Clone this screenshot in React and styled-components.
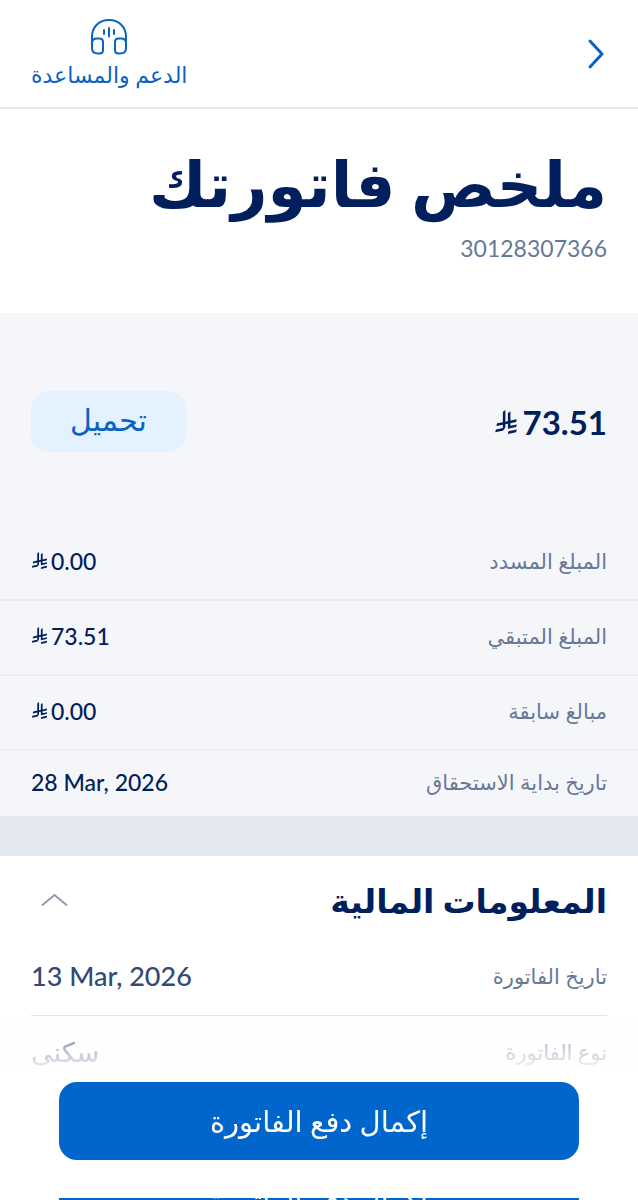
import { useState } from "react";
import styled, { createGlobalStyle } from "styled-components";

const GlobalStyle = createGlobalStyle`
  * {
    box-sizing: border-box;
  }
  body {
    margin: 0;
    background-color: #fff;
    color: #001f5c;
    font-family: Lato, "DejaVu Sans", sans-serif;
  }
  button {
    font-family: inherit;
    cursor: pointer;
  }
`;

const Page = styled.div`
  min-height: 100vh;
  padding-bottom: 120px;
`;

const TopBar = styled.header`
  display: flex;
  align-items: center;
  justify-content: space-between;
  height: 109px;
  padding: 0 31px;
  border-bottom: 2px solid #e6e8ed;
`;

const BackButton = styled.button`
  display: flex;
  padding: 0;
  border: none;
  background: none;
  color: #0a62c4;
`;

const SupportLink = styled.a`
  display: flex;
  flex-direction: column;
  align-items: center;
  gap: 6px;
  color: #0a62c4;
  font-size: 22px;
  line-height: 28px;
  text-decoration: none;
`;

const Intro = styled.section`
  height: 204px;
  padding: 32px 31px 0;
`;

const Title = styled.h1`
  margin: 0;
  font-size: 63px;
  line-height: 84px;
  font-weight: 700;
  white-space: nowrap;
`;

const AccountNumber = styled.p`
  margin: 8px 0 0;
  color: #687898;
  font-size: 23px;
  line-height: 30px;
`;

const Summary = styled.section`
  background-color: #f5f6fa;
  border-bottom: 40px solid #e4e8f0;
`;

const TotalRow = styled.div`
  display: flex;
  align-items: center;
  justify-content: space-between;
  padding: 78px 31px 74px;
`;

const Amount = styled.span`
  display: inline-flex;
  align-items: center;
  gap: ${(props) => (props.$large ? "5px" : "3px")};
  direction: ltr;
  font-size: ${(props) => (props.$large ? "33px" : "23px")};
  font-weight: ${(props) => (props.$large ? 700 : 500)};
  line-height: 30px;
`;

const DownloadButton = styled.button`
  width: 155px;
  height: 61px;
  padding: 0 0 4px;
  border: none;
  border-radius: 18px;
  background-color: #e4f1ff;
  color: #0a62c4;
  font-size: 30px;
`;

const List = styled.dl`
  margin: 0;
`;

const Row = styled.div`
  display: flex;
  align-items: center;
  justify-content: space-between;
  height: ${(props) => (props.$last ? "65px" : "75px")};
  padding: 0 31px 4px;
  border-bottom: ${(props) => (props.$last ? "none" : "2px solid #ebedf2")};
`;

const Label = styled.dt`
  color: #687898;
  font-size: 21px;
  line-height: 30px;
`;

const Value = styled.dd`
  margin: 0;
  direction: ltr;
  font-size: 23px;
  font-weight: 500;
  line-height: 30px;
`;

const Details = styled.section`
  padding: 0 31px;
`;

const DetailsHeader = styled.div`
  display: flex;
  align-items: center;
  justify-content: space-between;
  height: 84px;
  padding-top: 4px;
`;

const DetailsTitle = styled.h2`
  margin: 0;
  font-size: 33px;
  line-height: 44px;
  font-weight: 700;
`;

const ToggleButton = styled.button`
  display: flex;
  padding: 10px;
  border: none;
  background: none;
  color: #8f9ab2;
`;

const DetailRow = styled.div`
  display: flex;
  align-items: center;
  justify-content: space-between;
  height: 76px;
  padding-bottom: 4px;
  border-bottom: 1px solid #dfe5ec;
`;

const DetailValue = styled.dd`
  margin: 0;
  direction: ltr;
  color: #334a78;
  font-size: 27px;
  font-weight: 500;
  line-height: 36px;
`;

const Dock = styled.div`
  position: fixed;
  right: 0;
  bottom: 0;
  left: 0;
  height: 180px;
  overflow: hidden;
  padding: 62px 59px 0;
  background: linear-gradient(
    to bottom,
    rgba(255, 255, 255, 0),
    rgba(255, 255, 255, 0.6) 28px,
    #fff 54px
  );
`;

const PayButton = styled.button`
  display: block;
  width: 100%;
  height: 78px;
  border: none;
  border-radius: 18px;
  background-color: #0066cc;
  color: #fff;
  font-size: 29px;
`;

const NextButton = styled(PayButton)`
  display: flex;
  align-items: flex-start;
  justify-content: center;
  margin-top: 38px;
  padding: 0;
  border-radius: 0;
  line-height: 4px;
  overflow: hidden;
`;

const RiyalSign = ({ size }) => (
  <svg width={size} height={size} viewBox="0 0 1124 1256" fill="currentColor" role="img" aria-label="ريال">
    <path d="M699.62 1113.02c-20.06 44.48-33.32 92.75-38.4 143.37l424.51-90.24c20.06-44.47 33.31-92.75 38.4-143.37l-424.51 90.24Z" />
    <path d="M1085.73 895.8c20.06-44.47 33.32-92.75 38.4-143.37l-330.68 70.33v-135.2l292.27-62.11c20.06-44.47 33.32-92.75 38.4-143.37l-330.68 70.27V66.13c-50.67 28.45-95.67 66.32-132.25 110.99v403.35l-132.25 28.11V0c-50.67 28.44-95.67 66.32-132.25 110.99v525.69l-295.91 62.88c-20.06 44.47-33.33 92.75-38.42 143.37l334.33-71.05v170.26l-358.3 76.14c-20.06 44.47-33.32 92.75-38.4 143.37l375.04-79.7c30.53-6.35 56.77-24.4 73.83-49.24l68.78-101.97c7.14-10.55 11.3-23.27 11.3-36.97v-149.98l132.25-28.11v270.4l424.53-90.28Z" />
  </svg>
);

const HeadphonesIcon = () => (
  <svg width="36" height="36" viewBox="0 0 36 36" fill="none" stroke="currentColor" strokeWidth="2" strokeLinecap="round">
    <path d="M1 29V18C1 8 8 1 18 1s17 7 17 17v11" />
    <path d="M1 24c0-3 2-4.500 5-4.500h2.500c2.500 0 3.500 1 3.500 3.500v8c0 2.500-1 3.500-3.500 3.500H7c-4 0-6-2-6-5.500zM35 24c0-3-2-4.500-5-4.500h-2.500c-2.500 0-3.500 1-3.500 3.500v8c0 2.500 1 3.500 3.500 3.500H29c4 0 6-2 6-5.500z" />
    <path d="M13 11v4M18 9v8.500M23 11v4" />
  </svg>
);

const charges = [
  { label: "المبلغ المسدد", amount: "0.00" },
  { label: "المبلغ المتبقي", amount: "73.51" },
  { label: "مبالغ سابقة", amount: "0.00" },
];

const details = [
  { label: "تاريخ الفاتورة", value: "13 Mar, 2026" },
  { label: "نوع الفاتورة", value: "سكنى" },
];

const App = () => {
  const [open, setOpen] = useState(true);

  return (
    <Page dir="rtl" lang="ar">
      <GlobalStyle />

      <TopBar>
        <BackButton aria-label="رجوع">
          <svg width="20" height="32" viewBox="0 0 20 32" fill="none" stroke="currentColor" strokeWidth="3" strokeLinecap="round" strokeLinejoin="round">
            <path d="M3 3l12 13L3 29" />
          </svg>
        </BackButton>
        <SupportLink href="#support">
          <HeadphonesIcon />
          الدعم والمساعدة
        </SupportLink>
      </TopBar>

      <Intro>
        <Title>ملخص فاتورتك</Title>
        <AccountNumber>30128307366</AccountNumber>
      </Intro>

      <Summary>
        <TotalRow>
          <Amount $large>
            <RiyalSign size={24} />
            73.51
          </Amount>
          <DownloadButton>تحميل</DownloadButton>
        </TotalRow>
        <List>
          {charges.map((charge) => (
            <Row key={charge.label}>
              <Label>{charge.label}</Label>
              <Value>
                <Amount>
                  <RiyalSign size={17} />
                  {charge.amount}
                </Amount>
              </Value>
            </Row>
          ))}
          <Row $last>
            <Label>تاريخ بداية الاستحقاق</Label>
            <Value>28 Mar, 2026</Value>
          </Row>
        </List>
      </Summary>

      <Details>
        <DetailsHeader>
          <DetailsTitle>المعلومات المالية</DetailsTitle>
          <ToggleButton
            aria-label="المعلومات المالية"
            aria-expanded={open}
            onClick={() => setOpen(!open)}
          >
            <svg width="27" height="14" viewBox="0 0 27 14" fill="none" stroke="currentColor" strokeWidth="2" strokeLinecap="round" strokeLinejoin="round">
              <path d="M1.500 12L13.500 2l12 10" />
            </svg>
          </ToggleButton>
        </DetailsHeader>
        {open && (
          <List>
            {details.map((detail) => (
              <DetailRow key={detail.label}>
                <Label>{detail.label}</Label>
                <DetailValue>{detail.value}</DetailValue>
              </DetailRow>
            ))}
          </List>
        )}
      </Details>

      <Dock>
        <PayButton>إكمال دفع الفاتورة</PayButton>
        <NextButton>إكمال دفع الفاتورة</NextButton>
      </Dock>
    </Page>
  );
};

export default App;
